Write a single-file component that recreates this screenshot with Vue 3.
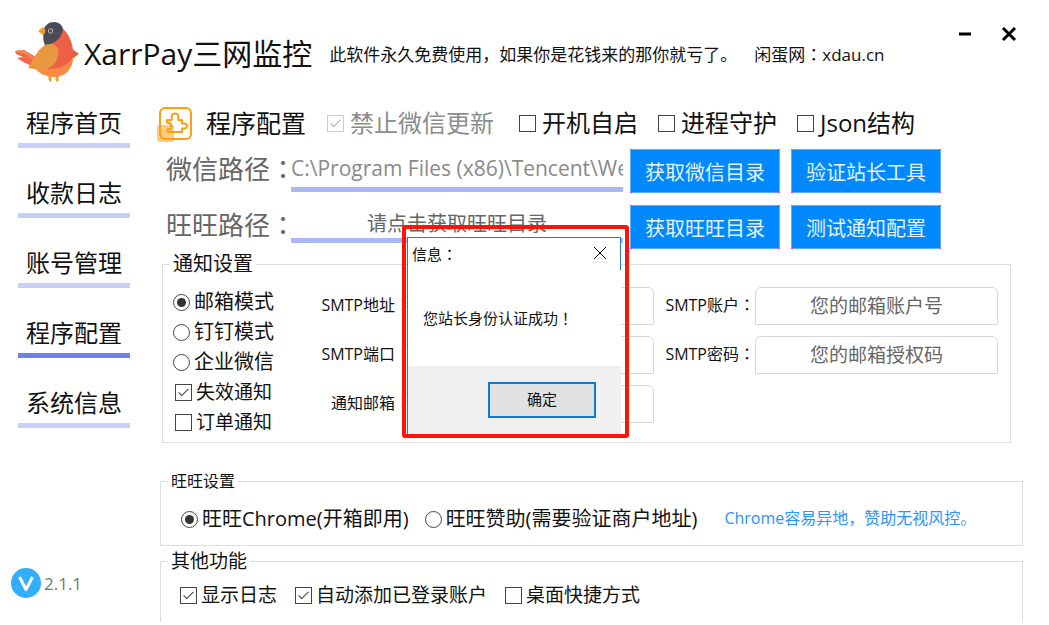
<template>
  <div class="window">
    <header class="title-bar">
      <svg class="bird" viewBox="14 22 68 64" aria-hidden="true">
        <path d="M15 51 L24 50 L36 57 L32 66 L25 63 L17 58 L23 57 L16 54 Z" fill="#f2694a" />
        <path d="M17 51 L24 52 L34 59" stroke="#f98c4f" stroke-width="2" fill="none" />
        <path d="M71 48 L79 54 L72 59 Z" fill="#d9663c" />
        <path d="M50 74 V80 H49 M57 74 V80 H56" stroke="#f5a029" stroke-width="3" fill="none" />
        <path d="M34 66 C37 73 46 77 54 77 C65 77 73 69 73 58 L50 58 Z" fill="#fc8a41" />
        <path d="M62 28 C69 33 74 46 73 55 C72 63 62 69 48 69 L44 45 C50 44 58 40 62 28 Z" fill="#ee5f48" />
        <path d="M45 45 C43 41 43 37 43.500 32 C44 25 49 22 54 22 C59 22 62 25 63 29 C62 37 56 44 45 45 Z" fill="#4a4b59" />
        <path d="M38 31 L43 27 C46 30 46 32 43 35 Z" fill="#f2a02c" />
        <circle cx="50.500" cy="31" r="2.200" fill="#4a4b59" stroke="#c9b9ae" stroke-width="1" />
        <path d="M28 68 C32 62 37 50 44 46 C48 43 56 43 58 49 C60 57 55 67 46 69 C40 70 34 69 28 68 Z" fill="#e8983f" />
      </svg>
      <h1 class="app-name">XarrPay三网监控</h1>
      <p class="slogan">
        <span>此软件永久免费使用，如果你是花钱来的那你就亏了。</span>
        <span>闲蛋网<i class="mark">：</i>xdau.cn</span>
      </p>
      <div class="window-actions">
        <button type="button" aria-label="最小化">
          <svg width="16" height="16" viewBox="0 0 16 16"><path d="M2 8 H14" /></svg>
        </button>
        <button type="button" aria-label="关闭">
          <svg width="16" height="16" viewBox="0 0 16 16"><path d="M2 2 L14 14 M14 2 L2 14" /></svg>
        </button>
      </div>
    </header>

    <div class="body">
      <aside class="sidebar">
        <nav class="nav">
          <a
            v-for="item in navItems"
            :key="item"
            href="#"
            class="nav-link"
            :class="{ active: item === currentPage }"
            @click.prevent="currentPage = item"
          >{{ item }}</a>
        </nav>
        <div class="version">
          <svg width="30" height="30" viewBox="0 0 30 30" aria-hidden="true">
            <circle cx="15" cy="15" r="15" fill="#33adff" />
            <path d="M8.500 9 L15 21.500 L21.500 9" fill="none" stroke="#fff" stroke-width="3" stroke-linejoin="round" />
          </svg>
          <span>2.1.1</span>
        </div>
      </aside>

      <main class="main">
        <div class="toolbar">
          <svg class="puzzle" width="36" height="36" viewBox="0 0 36 36" aria-hidden="true">
            <rect x="0" y="18" width="17" height="17" rx="2" fill="#ffcb80" />
            <rect x="3" y="1" width="31" height="31" rx="5" fill="none" stroke="#ff9c12" stroke-width="2" />
            <path
              d="M10 13 H14.500 C15.500 12 14 10 15 8 C16 6 20 6 21 8 C22 10 20.500 12 21.500 13 H25 V16.500 C27 16.500 30 16 30 19 C30 22 27 21.500 25 21.500 V25 H10.500 V22.500 C13 22.500 14.500 21 14.500 19 C14.500 17 13 16 10 15.500 Z"
              fill="none" stroke="#ff9c12" stroke-width="2" stroke-linejoin="round"
            />
          </svg>
          <h2 class="page-name">程序配置</h2>
          <div class="switches">
            <label v-for="item in switches" :key="item.label" class="option size-24" :class="{ disabled: item.disabled }">
              <input v-model="item.checked" type="checkbox" :disabled="item.disabled" />
              <span>{{ item.label }}</span>
            </label>
          </div>
        </div>

        <div class="paths">
          <label for="wechat-path">微信路径<i class="mark">：</i></label>
          <input id="wechat-path" v-model="wechatPath" class="path-input wechat" type="text" />
          <button type="button" class="blue-button">获取微信目录</button>
          <button type="button" class="blue-button">验证站长工具</button>

          <label for="wangwang-path">旺旺路径<i class="mark">：</i></label>
          <input id="wangwang-path" class="path-input" type="text" placeholder="请点击获取旺旺目录" />
          <button type="button" class="blue-button">获取旺旺目录</button>
          <button type="button" class="blue-button">测试通知配置</button>
        </div>

        <fieldset class="group notify">
          <legend>通知设置</legend>
          <div class="notify-content">
            <div class="notify-options">
              <label v-for="mode in notifyModes" :key="mode" class="option size-20">
                <input v-model="notifyMode" type="radio" name="notify-mode" :value="mode" />
                <span>{{ mode }}</span>
              </label>
              <label v-for="item in notices" :key="item.label" class="option notice">
                <input v-model="item.checked" type="checkbox" />
                <span>{{ item.label }}</span>
              </label>
            </div>
            <div class="mail-form">
              <template v-for="field in mailFields" :key="field.id">
                <label :for="field.id">{{ field.label }}<i class="mark">：</i></label>
                <input :id="field.id" :type="field.type" :placeholder="field.placeholder" />
              </template>
            </div>
          </div>
        </fieldset>

        <fieldset class="group wangwang">
          <legend>旺旺设置</legend>
          <div class="wangwang-row">
            <label v-for="mode in wangwangModes" :key="mode" class="option size-20">
              <input v-model="wangwangMode" type="radio" name="wangwang-mode" :value="mode" />
              <span>{{ mode }}</span>
            </label>
            <span class="hint">Chrome容易异地，赞助无视风控。</span>
          </div>
        </fieldset>

        <fieldset class="group others">
          <legend>其他功能</legend>
          <div class="others-row">
            <label v-for="item in others" :key="item.label" class="option">
              <input v-model="item.checked" type="checkbox" />
              <span>{{ item.label }}</span>
            </label>
          </div>
        </fieldset>
      </main>
    </div>

    <div v-if="dialogOpen" class="dialog-frame">
      <div class="dialog" role="dialog" aria-labelledby="dialog-title">
        <div class="dialog-head">
          <span id="dialog-title">信息<i class="mark">：</i></span>
          <button type="button" class="dialog-close" aria-label="关闭" @click="dialogOpen = false">
            <svg width="14" height="14" viewBox="0 0 14 14"><path d="M1 1 L13 13 M13 1 L1 13" /></svg>
          </button>
        </div>
        <p class="dialog-message">您站长身份认证成功<i class="mark">！</i></p>
        <div class="dialog-foot">
          <button type="button" class="confirm" @click="dialogOpen = false">确定</button>
        </div>
      </div>
    </div>
  </div>
</template>

<script setup>
import { ref } from 'vue';

const navItems = ['程序首页', '收款日志', '账号管理', '程序配置', '系统信息'];
const currentPage = ref('程序配置');

const switches = ref([
  { label: '禁止微信更新', checked: true, disabled: true },
  { label: '开机自启', checked: false, disabled: false },
  { label: '进程守护', checked: false, disabled: false },
  { label: 'Json结构', checked: false, disabled: false },
]);

const wechatPath = ref('C:\\Program Files (x86)\\Tencent\\WeChat');

// Notification settings
const notifyModes = ['邮箱模式', '钉钉模式', '企业微信'];
const notifyMode = ref('邮箱模式');
const notices = ref([
  { label: '失效通知', checked: true },
  { label: '订单通知', checked: false },
]);
const mailFields = [
  { id: 'smtp-host', label: 'SMTP地址', type: 'text', placeholder: '' },
  { id: 'smtp-user', label: 'SMTP账户', type: 'text', placeholder: '您的邮箱账户号' },
  { id: 'smtp-port', label: 'SMTP端口', type: 'text', placeholder: '' },
  { id: 'smtp-pass', label: 'SMTP密码', type: 'password', placeholder: '您的邮箱授权码' },
  { id: 'notify-mail', label: '通知邮箱', type: 'text', placeholder: '' },
];

const wangwangModes = ['旺旺Chrome(开箱即用)', '旺旺赞助(需要验证商户地址)'];
const wangwangMode = ref(wangwangModes[0]);

const others = ref([
  { label: '显示日志', checked: true },
  { label: '自动添加已登录账户', checked: true },
  { label: '桌面快捷方式', checked: false },
]);

const dialogOpen = ref(true);
</script>

<style>
body {
  background: #fff;
}
</style>

<style scoped>
.window {
  position: relative;
  display: flex;
  flex-direction: column;
  min-height: 100vh;
  box-sizing: border-box;
  padding-bottom: 3px;
  background: #fff;
  color: #111;
  font-family: "Open Sans", "Noto Sans CJK SC", sans-serif;
  font-size: 16px;
}

button,
input {
  font-family: inherit;
}

/* Punctuation centred in its cell */
.mark {
  font-family: "Noto Sans CJK TC", sans-serif;
  font-style: normal;
  line-height: 1;
}

/* Title bar */
.title-bar {
  display: flex;
  align-items: center;
  height: 68px;
  padding: 20px 30px 16px 14px;
}

.bird {
  flex: none;
  width: 68px;
  height: 64px;
}

.app-name {
  margin: 0 17px 0 2px;
  font-size: 30px;
  font-weight: 400;
  line-height: 40px;
  white-space: nowrap;
}

.slogan {
  display: flex;
  gap: 17px;
  margin: 2px 0 0;
  font-size: 17px;
  line-height: 24px;
  white-space: nowrap;
}

.window-actions {
  display: flex;
  align-self: flex-start;
  gap: 28px;
  margin: 6px 2px 0 auto;
}

.window-actions button {
  padding: 0;
  border: 0;
  background: none;
  line-height: 0;
}

.window-actions path {
  stroke: #000;
  stroke-width: 3;
}

.body {
  display: flex;
  flex: 1;
}

/* Sidebar */
.sidebar {
  display: flex;
  flex-direction: column;
  flex: none;
  width: 119px;
  padding-left: 11px;
}

.nav {
  display: flex;
  flex-direction: column;
  gap: 26px;
  margin-left: 7px;
}

.nav-link {
  height: 39px;
  border-bottom: 5px solid #c8cff7;
  color: #111;
  font-size: 24px;
  line-height: 38px;
  text-align: center;
  text-decoration: none;
}

.nav-link.active {
  border-color: #6c80e6;
}

.version {
  display: flex;
  align-items: center;
  gap: 3px;
  margin-top: auto;
  padding-bottom: 24px;
  color: #777;
  font-size: 17px;
}

/* Main */
.main {
  display: flex;
  flex-direction: column;
  flex: 1;
  min-width: 0;
  padding: 0 26px 0 30px;
}

.toolbar {
  display: flex;
  align-items: center;
  height: 38px;
  margin-left: -3px;
}

.puzzle {
  margin-top: 4px;
}

.page-name {
  margin: 0 21px 0 13px;
  font-size: 25px;
  font-weight: 400;
  line-height: 36px;
  white-space: nowrap;
}

.switches {
  display: flex;
  gap: 20px;
}

.option {
  display: flex;
  align-items: center;
  gap: 4px;
  font-size: 19px;
  line-height: 30px;
  white-space: nowrap;
}

.size-20 {
  font-size: 20px;
}

.size-24 {
  gap: 6px;
  font-size: 24px;
}

.option.disabled {
  margin-right: 5px;
  color: #8c8c8c;
}

.option input {
  position: relative;
  flex: none;
  width: 17px;
  height: 17px;
  margin: 0;
  border: 1px solid #444;
  background: #fff;
  appearance: none;
}

.option input[type="radio"] {
  border-radius: 50%;
}

.option input:disabled {
  border-color: #ccc;
}

.option input:checked::after {
  content: "";
  position: absolute;
}

.option input[type="checkbox"]:checked::after {
  top: 1px;
  left: 5px;
  width: 4px;
  height: 9px;
  border: solid #444;
  border-width: 0 1px 1px 0;
  transform: rotate(45deg);
}

.option input[type="checkbox"]:disabled::after {
  border-color: #aaa;
}

.option input[type="radio"]:checked::after {
  inset: 3px;
  border-radius: 50%;
  background: #333;
}

/* Path rows */
.paths {
  display: grid;
  grid-template-columns: 125px 1fr 150px 150px;
  grid-auto-rows: 44px;
  column-gap: 11px;
  row-gap: 12px;
  margin: 7px 82px 0 6px;
}

.paths label {
  color: #666;
  font-size: 26px;
  line-height: 40px;
  white-space: nowrap;
}

.path-input {
  box-sizing: border-box;
  height: 38px;
  min-width: 0;
  margin: 0 -4px 0 -11px;
  padding: 4px 0 0;
  border: 0;
  border-bottom: 5px solid #adb7f3;
  background: none;
  color: #666;
  font-size: 20px;
  text-align: center;
  outline: none;
}

.path-input.wechat {
  height: 43px;
  padding: 0;
  color: #8a8a8a;
  font-size: 21px;
  text-align: left;
}

.path-input::placeholder,
.mail-form input::placeholder {
  color: #666;
  opacity: 1;
}

/* Blue button with tinted corner pixels */
.blue-button {
  padding: 0;
  border: 0;
  background:
    linear-gradient(#f3f, #f3f) left top / 2px 1px no-repeat,
    linear-gradient(#f3f, #f3f) right top / 2px 1px no-repeat,
    linear-gradient(#f3f, #f3f) left bottom / 2px 1px no-repeat,
    linear-gradient(#f3f, #f3f) right bottom / 2px 1px no-repeat,
    linear-gradient(#08f, #08f) center / calc(100% - 2px) calc(100% - 2px) no-repeat,
    #59b0ff;
  color: #e6f3ff;
  font-size: 20px;
}

/* Groups */
.group {
  min-width: 0;
  margin: 0;
  padding: 0;
  border: 1px solid #dedede;
}

.group legend {
  margin-left: 7px;
  padding: 0 3px;
  font-size: 19px;
  line-height: 24px;
}

.notify {
  margin: 3px 12px 0 2px;
}

.notify legend {
  font-size: 20px;
}

.notify-content {
  display: flex;
  padding: 11px 12px 5px 10px;
}

.notify-options {
  flex: none;
  width: 136px;
}

.notice {
  margin-left: 2px;
}

.mail-form {
  display: grid;
  flex: 1;
  grid-template-columns: 102px 1fr 101px 1fr;
  grid-auto-rows: 38px;
  row-gap: 11px;
}

.mail-form label {
  line-height: 36px;
  text-align: right;
  white-space: nowrap;
}

.mail-form input {
  box-sizing: border-box;
  width: 100%;
  min-width: 0;
  padding: 0 8px;
  border: 1px solid #d6d8da;
  border-radius: 6px 6px 0 0;
  background: #fff;
  font-size: 19px;
  text-align: center;
  outline: none;
}

.wangwang {
  margin-top: 28px;
}

.wangwang legend {
  font-size: 16px;
  line-height: 20px;
}

.wangwang-row {
  display: flex;
  align-items: center;
  gap: 16px;
  padding: 13px 20px 11px;
}

.hint {
  margin-left: 11px;
  padding-bottom: 3px;
  color: #2894ff;
  line-height: 24px;
  white-space: nowrap;
}

.others {
  flex: 1;
  margin-top: 3px;
  border-bottom: 0;
}

.others-row {
  display: flex;
  gap: 18px;
  padding: 7px 19px;
}

/* Message box */
.dialog-frame {
  position: absolute;
  top: 225px;
  left: 402px;
  box-sizing: border-box;
  width: 227px;
  padding: 8px 4px 0 1px;
  border: 4px solid #ff1208;
  border-radius: 3px;
}

.dialog {
  border-top: 1px solid #1a7fd4;
  border-left: 1px solid #1a7fd4;
  background: #fff;
  font-size: 15px;
}

.dialog-head {
  display: flex;
  align-items: center;
  justify-content: space-between;
  height: 30px;
  padding: 0 13px 2px 4px;
  border-right: 1px solid #1a7fd4;
}

.dialog-close {
  padding: 0;
  border: 0;
  background: none;
  line-height: 0;
}

.dialog-close path {
  stroke: #000;
  stroke-width: 1;
}

.dialog-message {
  margin: 0;
  padding: 36px 0 36px 15px;
  line-height: 24px;
}

.dialog-foot {
  display: flex;
  justify-content: flex-end;
  padding: 16px 25px;
  background: #f0f0f0;
}

.confirm {
  width: 108px;
  height: 36px;
  padding: 0 0 3px;
  border: 2px solid #0a7bd8;
  background: #e1e1e1;
  color: #111;
  font-size: 15px;
}
</style>
